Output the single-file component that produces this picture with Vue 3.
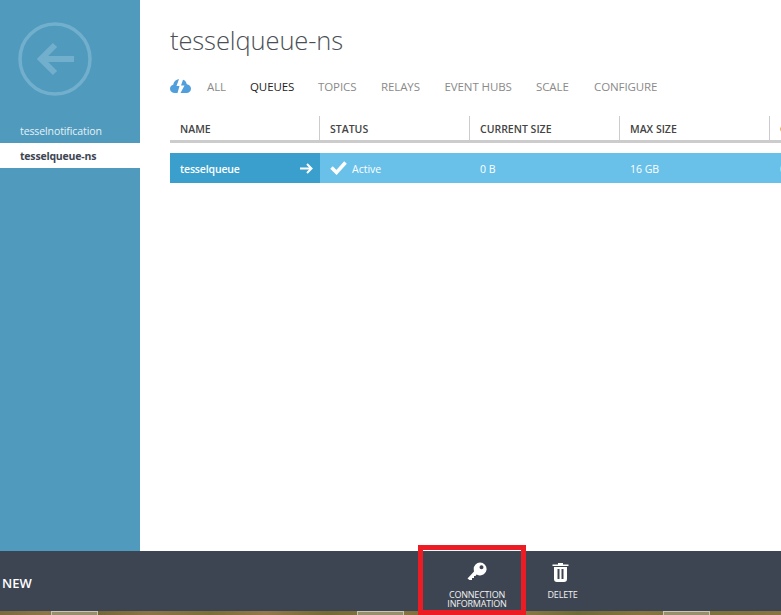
<script setup>
const tabs = [
  { label: 'ALL', w: 43 },
  { label: 'QUEUES', w: 68, active: true },
  { label: 'TOPICS', w: 63 },
  { label: 'RELAYS', w: 63.500 },
  { label: 'EVENT HUBS', w: 91.500 },
  { label: 'SCALE', w: 58 },
  { label: 'CONFIGURE', w: 80 }
]
const cols = ['NAME', 'STATUS', 'CURRENT SIZE', 'MAX SIZE', 'CREATED']
const tiles = [0, 1, 2]
</script>

<template>
  <div class="page">
    <div class="main">
      <aside class="side">
        <svg class="back" width="74" height="74" viewBox="0 0 74 74">
          <circle cx="37" cy="37" r="35" fill="none" stroke="#72afcd" stroke-width="3.5" />
          <path d="M56 37H24M37 23L23 37L37 51" fill="none" stroke="#72afcd" stroke-width="6" />
        </svg>
        <div class="side-item">tesselnotification</div>
        <div class="side-item current">tesselqueue-ns</div>
      </aside>
      <main class="content">
        <h1>tesselqueue-ns</h1>
        <nav class="tabs">
          <svg class="cloud" width="21" height="14" viewBox="0 0 21 14">
            <path d="M5 14C2 14 0 12.300 0 9.800C0 7.600 1.500 6.100 3.200 5.800C3.800 2.500 6 .5 9 0L6.500 7H9.500L7.500 14ZM10.500 14L14.500 6.500H11L13 .8C15 1.300 16.300 3 16.800 5.300C19.200 5.500 21 7.300 21 9.800C21 12.300 19 14 16.500 14Z" fill="#4f9fdc" />
          </svg>
          <span v-for="t in tabs" :key="t.label" class="tab" :class="{ on: t.active }" :style="{ width: t.w + 'px' }">{{ t.label }}</span>
        </nav>
        <div class="head">
          <div v-for="c in cols" :key="c" class="hcell">{{ c }}</div>
        </div>
        <div class="row">
          <div class="cell name">
            <span>tesselqueue</span>
            <svg width="13" height="11" viewBox="0 0 13 11"><path d="M0 5.500H11M7 1L11.500 5.500L7 10" fill="none" stroke="#fff" stroke-width="2" /></svg>
          </div>
          <div class="cell status">
            <svg width="17" height="14" viewBox="0 0 17 14"><path d="M1.500 6.500L6.500 11.500L15.500 1.500" fill="none" stroke="#fff" stroke-width="3.500" /></svg>
            <span>Active</span>
          </div>
          <div class="cell">0 B</div>
          <div class="cell">16 GB</div>
          <div class="cell">0</div>
        </div>
      </main>
    </div>
    <footer class="bar">
      <div class="new">NEW</div>
      <div class="actions">
        <div class="action conn">
          <svg width="20" height="20" viewBox="0 0 20 20">
            <path fill-rule="evenodd" d="M13 0.500A6.500 6.500 0 1 1 11.500 13.300L9.500 12.500L8.500 14H7V16H5V18H2.500L0.500 16.500L7 9.500L6.700 7A6.500 6.500 0 0 1 13 0.500ZM14.500 3.200A2 2 0 1 0 14.500 7.200A2 2 0 1 0 14.500 3.200Z" fill="#fff" />
          </svg>
          <span>CONNECTION<br />INFORMATION</span>
        </div>
        <div class="action del">
          <svg width="17" height="19" viewBox="0 0 17 19">
            <path d="M6 0H11V1.500H16.500V3H.5V1.500H6ZM2 4H15V16C15 17.800 14 19 12 19H5C3 19 2 17.800 2 16ZM5.500 6V16H7.500V6ZM9.500 6V16H11.500V6Z" fill="#fff" fill-rule="evenodd" />
          </svg>
          <span>DELETE</span>
        </div>
      </div>
    </footer>
    <div class="strip">
      <div v-for="t in tiles" :key="t" class="tile"></div>
    </div>
  </div>
</template>

<style scoped>
.page {
  width: 781px;
  height: 615px;
  overflow: hidden;
  display: flex;
  flex-direction: column;
  font-family: "Open Sans", "Noto Sans", sans-serif;
  background: #fff;
}
.main { flex: 1; display: flex; min-height: 0; }
.side {
  width: 140px;
  flex: none;
  background: #4f9abd;
  padding-top: 22px;
  box-sizing: border-box;
}
.back { display: block; margin-left: 18px; margin-bottom: 22px; }
.side-item {
  height: 25px;
  line-height: 27px;
  padding-left: 20px;
  font-size: 10.500px;
  color: #e6f1f6;
  letter-spacing: -.1px;
}
.side-item.current {
  background: #fff;
  color: #3e4552;
  font-weight: 700;
  width: 139px;
  letter-spacing: -.2px;
}
.content { flex: 1; min-width: 0; padding: 23px 0 0 30px; overflow: hidden; }
h1 {
  margin: 0;
  font-size: 25.500px;
  line-height: 34px;
  font-weight: 300;
  color: #4b4f55;
  letter-spacing: -.1px;
}
.tabs { display: flex; align-items: center; height: 20px; margin-top: 19px; }
.cloud { margin-right: 16px; flex: none; }
.tab {
  flex: none;
  font-size: 11.500px;
  color: #8a8a8a;
  white-space: nowrap;
  letter-spacing: -.1px;
}
.tab.on { color: #222; }
.head {
  display: flex;
  margin-top: 20px;
  width: 640px;
  border-bottom: 3px solid #cccccc;
}
.hcell {
  flex: none;
  width: 150px;
  height: 24px;
  line-height: 26px;
  padding-left: 10px;
  box-sizing: border-box;
  border-right: 1px solid #ccc;
  font-size: 10.500px;
  font-weight: 600;
  color: #444;
}
.hcell:last-child { border-right: 0; }
.row {
  display: flex;
  width: 640px;
  height: 30px;
  margin-top: 10px;
  background: #69c1e9;
}
.cell {
  flex: none;
  width: 150px;
  box-sizing: border-box;
  padding-left: 10px;
  display: flex;
  align-items: center;
  font-size: 10.500px;
  color: #fff;
}
.cell span, .cell:nth-child(n + 3) { padding-top: 1px; }
.name {
  background: #3a9fcd;
  justify-content: space-between;
  padding-right: 7px;
  font-weight: 600;
  letter-spacing: -.15px;
}
.status { gap: 5px; padding-left: 10px; }
.bar {
  flex: none;
  height: 60px;
  background: #3e4552;
  display: flex;
  align-items: center;
  position: relative;
}
.new {
  width: 418px;
  box-sizing: border-box;
  padding-left: 2px;
  flex: none;
  color: #fff;
  font-size: 13px;
  font-weight: 600;
  padding-top: 4px;
}
.actions { display: flex; height: 100%; }
.action {
  display: flex;
  flex-direction: column;
  align-items: center;
  color: #f1f2f3;
  font-size: 9px;
  line-height: 9px;
  text-align: center;
  box-sizing: border-box;
  letter-spacing: -.2px;
  padding-top: 11px;
  gap: 8px;
}
.conn { width: 118px; }
.conn::after {
  content: "";
  position: absolute;
  left: 418px;
  top: -6px;
  width: 108px;
  height: 70px;
  box-sizing: border-box;
  border: 5px solid #ec1c24;
}
.del { width: 53px; padding-top: 12px; }
.del svg { margin-right: 4px; }
.strip {
  flex: none;
  height: 4px;
  background: linear-gradient(90deg, #7a6a3c, #8d7748 6%, #6f6434 11%, #8a7445 19%, #7c6e3b 27%, #93784a 34%, #736a36 42%, #8b7443 50%, #7a6a3a 58%, #8f7a48 66%, #6e6a36 74%, #86743f 82%, #7a703c 90%, #8a7444);
  display: flex;
  padding-left: 51px;
  gap: 259px;
}
.tile {
  flex: none;
  width: 47px;
  height: 4px;
  box-sizing: border-box;
  background: #978e6c;
  border: 1px solid #c9c4ae;
  border-bottom: 0;
}
</style>

<style>
html, body { margin: 0; padding: 0; }
</style>
